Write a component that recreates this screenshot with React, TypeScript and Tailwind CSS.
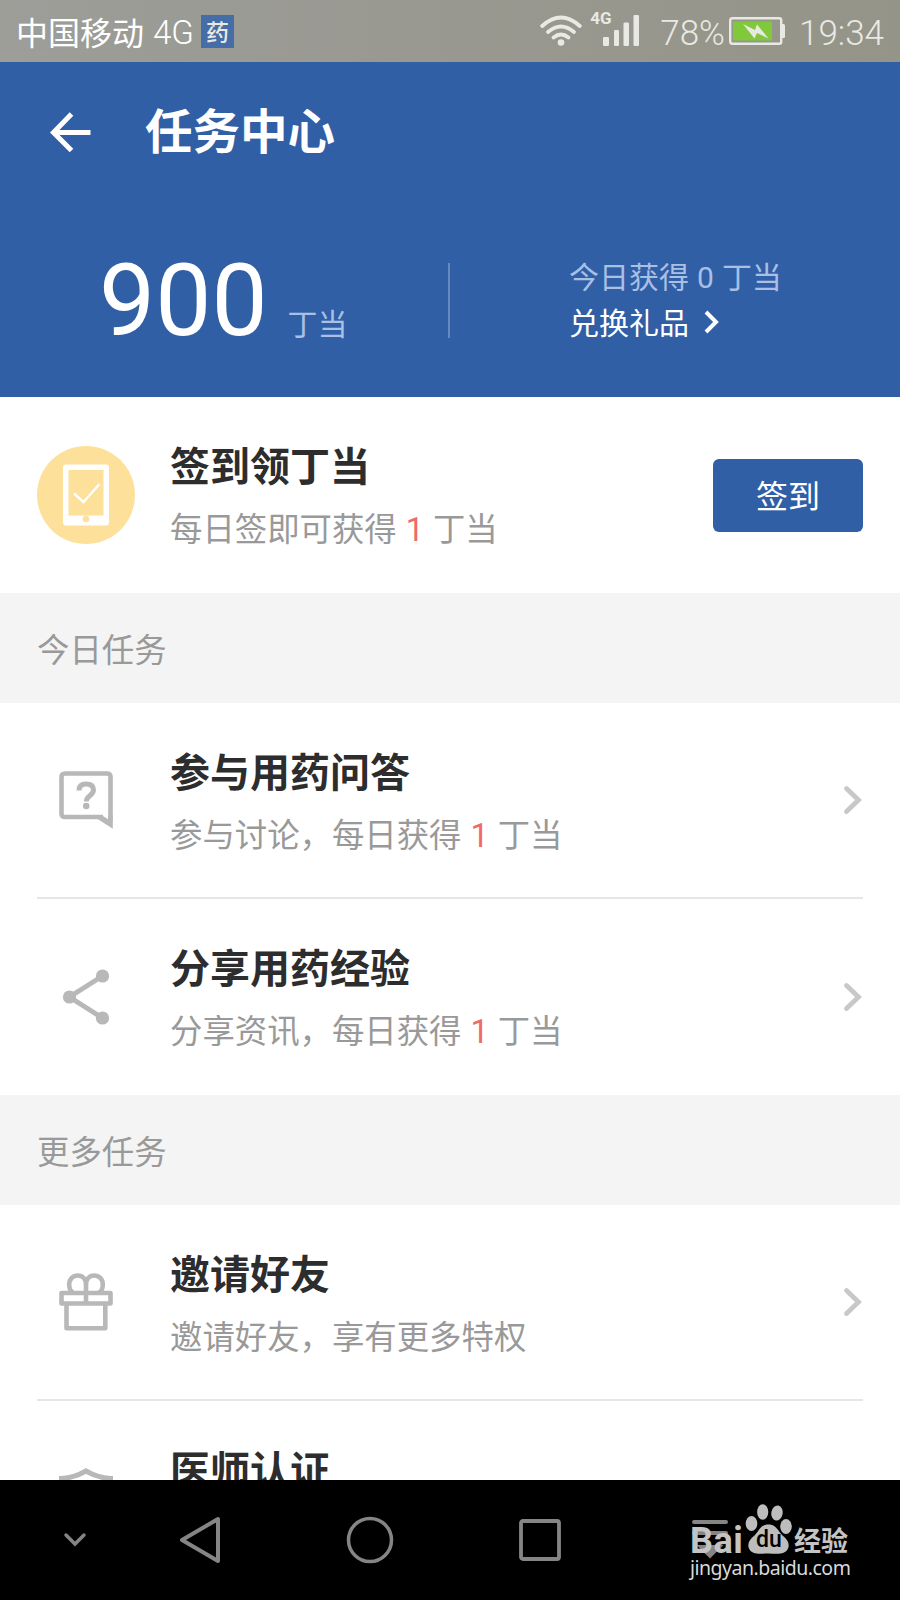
import type { ReactNode } from "react";

interface TaskRowProps {
    icon: ReactNode;
    title: string;
    children?: ReactNode;
    action?: ReactNode;
    bordered?: boolean;
}

function WifiIcon() {
    return (
        <svg width="42" height="32" viewBox="0 0 42 32" fill="none" stroke="#e9e9e4" strokeWidth="3.8" strokeLinecap="round">
            <path d="M2.2 11 Q21 -6 39.8 11" />
            <path d="M8 17 Q21 6 34 17" />
            <path d="M13.5 22.5 Q21 16.5 28.5 22.5" />
            <circle cx="21" cy="27.5" r="3.3" fill="#e9e9e4" stroke="none" />
        </svg>
    );
}

function SignalIcon() {
    return (
        <svg width="37" height="32" viewBox="0 0 37 32" fill="#e9e9e4">
            <rect x="0" y="22" width="6" height="9" rx="1.2" />
            <rect x="11" y="15" width="5" height="16" rx="1.2" />
            <rect x="20.5" y="7.5" width="5.5" height="23.5" rx="1.2" />
            <rect x="30.5" y="0" width="5.5" height="31" rx="1.2" />
        </svg>
    );
}

function BatteryIcon() {
    return (
        <svg width="57" height="28" viewBox="0 0 57 28">
            <rect x="1.2" y="1.2" width="51" height="25.6" rx="2" fill="none" stroke="#e9e9e4" strokeWidth="2.4" />
            <rect x="4" y="4.5" width="39" height="19" fill="#7fc93a" />
            <path d="M53 7h1.5q1.5 0 1.5 1.5v11q0 1.5-1.5 1.5H53z" fill="#e9e9e4" />
            <path d="M14 7l12 6 2-5.5L39.5 21.5 28 16l-2.5 5.5z" fill="#e9e9e4" />
        </svg>
    );
}

function Chevron() {
    return (
        <svg className="mr-px" width="19" height="30" viewBox="0 0 19 30" fill="none" stroke="#c8c8c8" strokeWidth="4.8" strokeLinecap="round">
            <path d="M3.5 3.5L15.5 15 3.5 26.5" />
        </svg>
    );
}

function SignIcon() {
    return (
        <svg width="98" height="98" viewBox="0 0 98 98">
            <circle cx="49" cy="49" r="49" fill="#fde09a" />
            <rect x="26" y="18.5" width="46" height="61" rx="3" fill="#fff" />
            <rect x="31.5" y="24" width="35" height="45.5" fill="#fde09a" />
            <circle cx="49" cy="73" r="3.3" fill="#fde09a" />
            <path d="M37 47.5l9.5 8.5L62.5 38" fill="none" stroke="#fff" strokeWidth="2.4" />
        </svg>
    );
}

function QuestionIcon() {
    return (
        <svg width="54" height="58" viewBox="0 0 54 58" fill="none" stroke="#b8b8b8" strokeWidth="4.6">
            <path d="M51.5 50V5.5Q51.5 2.5 48 2.5H6Q2.5 2.5 2.5 6v36.5Q2.5 46 6 46H44" />
            <path d="M39 48.3l3-4.6 7.2 4.5V44H53.8v13.8z" fill="#b8b8b8" stroke="none" />
            <path d="M20 19.5q0-6.5 7.2-6.5t7.3 6c0 5.500-7.200 5.500-7.200 11.500" strokeWidth="5" />
            <circle cx="27.2" cy="35" r="3.3" fill="#b8b8b8" stroke="none" />
        </svg>
    );
}

function ShareIcon() {
    return (
        <svg width="54" height="58" viewBox="0 0 54 58" fill="#b8b8b8" stroke="#b8b8b8">
            <path d="M43.5 8L10.5 29l33 21" fill="none" strokeWidth="5" />
            <circle cx="43.5" cy="8" r="6.6" stroke="none" />
            <circle cx="10.5" cy="29" r="6.6" stroke="none" />
            <circle cx="43.5" cy="50" r="6.6" stroke="none" />
        </svg>
    );
}

function GiftIcon() {
    return (
        <svg width="54" height="58" viewBox="0 0 54 58" fill="none" stroke="#b8b8b8" strokeWidth="4.6" strokeLinejoin="round">
            <path d="M2.5 20h49v10.5h-49zM7.5 30.5v24.8h38.8V30.5" />
            <path d="M27 30V12C27 6 23.5 2.5 18.8 2.5S10.2 6 10.2 11.5 12 18.5 14.5 20M27 12C27 6 30.5 2.5 35.2 2.5s8.6 3.5 8.6 9-1.8 7-4.3 8.5" />
        </svg>
    );
}

function ShieldIcon() {
    return (
        <svg width="54" height="62" viewBox="0 0 54 62" fill="none" stroke="#b8b8b8" strokeWidth="5">
            <path d="M27 3Q15 10 2.5 10.5V30q0 18 24.5 27 24.5-9 24.5-27V10.5Q39 10 27 3z" />
        </svg>
    );
}

function Coin({ children }: { children: ReactNode }) {
    return <span className="mx-[9px] font-[Roboto] leading-none text-[#ef6b6b]">{children}</span>;
}

function TaskRow({ icon, title, children, action = <Chevron />, bordered = false }: TaskRowProps) {
    return (
        <div className={`mx-[37px] flex h-[196px] shrink-0 items-center ${bordered ? "border-b-2 border-[#e6e6e6]" : ""}`}>
            <div className="flex w-[98px] justify-center">{icon}</div>
            <div className={`ml-[35px] flex-1 ${bordered ? "pb-[2px]" : "pb-[4px]"}`}>
                <h2 className="text-[40px] leading-[48px] font-bold text-[#2d2d2d]">{title}</h2>
                <p className="mt-[19px] h-[40px] text-[32.4px] leading-[40px] text-[#999]">{children}</p>
            </div>
            {action}
        </div>
    );
}

function SectionTitle({ children }: { children: ReactNode }) {
    return (
        <div className="flex h-[110px] shrink-0 items-center bg-[#f4f4f4] px-[37px] text-[32.4px] text-[#999]">
            {children}
        </div>
    );
}

function Watermark() {
    return (
        <div className="absolute top-[23px] left-[690px] w-[164px] text-[#c4c4c4]">
            <div className="flex h-[52px] items-end">
                <span className="w-[54px] font-[Roboto] text-[36px] leading-[28px] font-bold tracking-[0.5px]">Bai</span>
                <div className="relative h-[52px] w-[50px]">
                    <svg width="50" height="52" viewBox="0 0 50 52" fill="#bdbdbd">
                        <ellipse cx="7.5" cy="20.5" rx="5.8" ry="7.5" />
                        <ellipse cx="18.7" cy="9" rx="5.6" ry="7.8" />
                        <ellipse cx="33" cy="10" rx="5.7" ry="7.5" transform="rotate(10 33 10)" />
                        <ellipse cx="42" cy="23.5" rx="5.8" ry="7.6" />
                        <path d="M24.5 21.5c-8 0-9 6-14 11-5 4-7.5 8-5.5 13 3 7 12 5 19.5 5s16.5 2 19.5-5c2-5-.5-9-5.5-13-5-5-6-11-14-11z" />
                    </svg>
                    <span className="absolute top-[25px] left-[12px] font-[Roboto] text-[23px] leading-[24px] font-medium text-black">du</span>
                </div>
                <span className="text-[27px] leading-[31px] font-bold">经验</span>
            </div>
            <p className="font-['Noto_Sans'] text-[19.5px] leading-[26px] tracking-[-0.5px] whitespace-nowrap text-[#dadada]">jingyan.baidu.com</p>
        </div>
    );
}

export default function App() {
    return (
        <div className="flex h-[1600px] w-[900px] flex-col overflow-hidden bg-white font-['Noto_Sans_CJK_SC',sans-serif]">
            {/* Status bar */}
            <div className="flex h-[62px] shrink-0 items-center justify-between bg-linear-to-r from-[#9d9d99] to-[#949488] pr-4 pl-4 text-[#e9e9e4]">
                <div className="flex items-center">
                    <span className="text-[32px] text-white">中国移动</span>
                    <span className="ml-[9px] pt-[4px] font-[Roboto] text-[33px] font-light text-white">4G</span>
                    <span className="ml-[7px] flex h-[33px] w-[33px] items-center justify-center bg-[#456da8] text-[23px] font-medium">药</span>
                </div>
                <div className="flex items-center">
                    <WifiIcon />
                    <div className="relative ml-[21px]">
                        <SignalIcon />
                        <span className="absolute -top-[5px] -left-[13px] font-[Roboto] text-[17px] leading-[16px] font-bold">4G</span>
                    </div>
                    <span className="ml-[20px] pt-[6px] font-[Roboto] text-[35px] font-light">78%</span>
                    <span className="ml-[4px]"><BatteryIcon /></span>
                    <span className="ml-[13px] pt-[6px] font-[Roboto] text-[35px] font-light">19:34</span>
                </div>
            </div>

            {/* Header with balance */}
            <header className="h-[335px] shrink-0 bg-[#305fa6] text-white">
                <div className="flex h-[140px] items-center pl-[49px]">
                    <svg width="42" height="40" viewBox="0 0 42 40" fill="none" stroke="#fff" strokeWidth="5">
                        <path d="M22.5 2L4.5 20.5l18 18M4.5 20.5h37" />
                    </svg>
                    <h1 className="ml-[54px] pb-[6px] text-[47.5px] font-bold">任务中心</h1>
                </div>
                <div className="flex h-[195px] items-start">
                    <div className="flex w-[448px] items-baseline pl-[99px]">
                        <span className="font-[Roboto] text-[100px] leading-[197px]">900</span>
                        <span className="ml-[20px] text-[30px] text-[#a9bfe4]">丁当</span>
                    </div>
                    <div className="mt-[61px] h-[75px] w-[2px] bg-[#6689c2]" />
                    <div className="mt-[51px] ml-[119px] text-[30px] leading-[45px]">
                        <p className="text-[#a9bfe4]">今日获得<span className="mx-[8px] font-[Roboto]">0</span>丁当</p>
                        <p className="-mt-px flex items-center">
                            兑换礼品
                            <svg className="ml-[15px]" width="16" height="24" viewBox="0 0 16 24" fill="none" stroke="#fff" strokeWidth="4">
                                <path d="M2 2l10 10L2 22" />
                            </svg>
                        </p>
                    </div>
                </div>
            </header>

            <main className="flex min-h-0 flex-1 flex-col overflow-hidden">
                <TaskRow
                    icon={<SignIcon />}
                    title="签到领丁当"
                    action={
                        <button className="h-[73px] w-[150px] rounded-md bg-[#305fa6] pb-[3px] text-[32px] text-white">签到</button>
                    }
                >
                    每日签即可获得<Coin>1</Coin>丁当
                </TaskRow>

                <SectionTitle>今日任务</SectionTitle>
                <TaskRow icon={<QuestionIcon />} title="参与用药问答" bordered>
                    参与讨论，每日获得<Coin>1</Coin>丁当
                </TaskRow>
                <TaskRow icon={<ShareIcon />} title="分享用药经验">
                    分享资讯，每日获得<Coin>1</Coin>丁当
                </TaskRow>

                <SectionTitle>更多任务</SectionTitle>
                <TaskRow icon={<GiftIcon />} title="邀请好友" bordered>
                    邀请好友，享有更多特权
                </TaskRow>
                <TaskRow icon={<ShieldIcon />} title="医师认证" />
            </main>

            {/* Android navigation bar */}
            <nav className="relative flex h-[120px] shrink-0 items-center bg-black pl-[63px]">
                <svg width="24" height="18" viewBox="0 0 24 18" fill="none" stroke="#858585" strokeWidth="3.5" strokeLinecap="round">
                    <path d="M3 4l9 9 9-9" />
                </svg>
                <svg className="ml-[92px]" width="42" height="48" viewBox="0 0 42 48" fill="none" stroke="#858585" strokeWidth="4" strokeLinejoin="round">
                    <path d="M39 3v42L3 24z" />
                </svg>
                <svg className="ml-[125px]" width="48" height="48" viewBox="0 0 48 48" fill="none" stroke="#858585" strokeWidth="3.5">
                    <circle cx="24" cy="24" r="21.5" />
                </svg>
                <svg className="ml-[124px]" width="44" height="44" viewBox="0 0 44 44" fill="none" stroke="#858585" strokeWidth="3.8">
                    <rect x="3" y="3" width="38" height="38" rx="2" />
                </svg>
                <svg className="ml-[129px]" width="38" height="44" viewBox="0 0 38 44" fill="none" stroke="#858585" strokeWidth="4" strokeLinecap="round">
                    <path d="M3 4h32M3 15h32" />
                    <path d="M8 28h22L19 39z" fill="#858585" strokeWidth="2" />
                </svg>
                <Watermark />
            </nav>
        </div>
    );
}
